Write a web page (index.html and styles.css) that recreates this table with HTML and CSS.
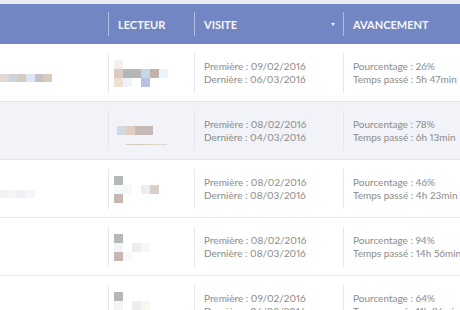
FILE: index.html
```html
<!DOCTYPE html>
<html lang="fr">
<head>
<meta charset="utf-8">
<link rel="stylesheet" href="styles.css">
</head>
<body>
<div class="strip"></div>
<div class="table">
  <div class="head">
    <div class="hcell first"></div>
    <div class="hcell"><span>LECTEUR</span></div>
    <div class="hcell sort"><span>VISITE</span><span class="arrow"></span></div>
    <div class="hcell"><span>AVANCEMENT</span></div>
  </div>

  <div class="row">
    <div class="cell first">
      <div class="blur name">
        <i class="b1"></i><i class="b2"></i><i class="b3"></i><i class="b4"></i><i class="b5"></i><i class="b6"></i>
      </div>
    </div>
    <div class="cell">
      <div class="av">
        <i class="f1"></i><i></i><i></i><i></i><i></i><i></i>
        <i class="a1"></i><i class="a2"></i><i class="a2"></i><i class="a3"></i><i class="a4"></i><i class="a5"></i>
        <i class="a6"></i><i class="a7"></i><i></i><i class="a8"></i><i></i><i></i>
      </div>
    </div>
    <div class="cell text">
      <p>Première : 09/02/2016</p>
      <p>Dernière : 06/03/2016</p>
    </div>
    <div class="cell text">
      <p>Pourcentage : 26%</p>
      <p>Temps passé : 5h 47min</p>
    </div>
  </div>

  <div class="row alt">
    <div class="cell first"></div>
    <div class="cell">
      <div class="av sh">
        <i></i><i></i><i></i><i></i><i></i><i></i>
        <i class="c1"></i><i class="c2"></i><i class="c3"></i><i class="c3"></i><i></i><i></i>
        <i class="f2"></i><i></i><i></i><i></i><i></i><i></i>
      </div>
      <div class="uline"></div>
    </div>
    <div class="cell text">
      <p>Première : 08/02/2016</p>
      <p>Dernière : 04/03/2016</p>
    </div>
    <div class="cell text">
      <p>Pourcentage : 78%</p>
      <p>Temps passé : 6h 13min</p>
    </div>
  </div>

  <div class="row">
    <div class="cell first">
      <div class="blur name faint">
        <i class="g1"></i><i class="g2"></i><i class="g3"></i><i class="g2"></i>
      </div>
    </div>
    <div class="cell">
      <div class="av">
        <i class="d1"></i><i></i><i></i><i></i><i></i><i></i>
        <i class="d2"></i><i class="d3"></i><i></i><i class="d4"></i><i class="d5"></i><i></i>
        <i class="d6"></i><i></i><i></i><i></i><i></i><i></i>
      </div>
    </div>
    <div class="cell text">
      <p>Première : 08/02/2016</p>
      <p>Dernière : 08/03/2016</p>
    </div>
    <div class="cell text">
      <p>Pourcentage : 46%</p>
      <p>Temps passé : 4h 23min</p>
    </div>
  </div>

  <div class="row">
    <div class="cell first"></div>
    <div class="cell">
      <div class="av">
        <i class="d1"></i><i></i><i></i><i></i><i></i><i></i>
        <i class="f2"></i><i></i><i class="d4"></i><i class="d3"></i><i></i><i></i>
        <i class="d6"></i><i class="f3"></i><i></i><i></i><i></i><i></i>
      </div>
    </div>
    <div class="cell text">
      <p>Première : 08/02/2016</p>
      <p>Dernière : 08/03/2016</p>
    </div>
    <div class="cell text">
      <p>Pourcentage : 94%</p>
      <p>Temps passé : 14h 56min</p>
    </div>
  </div>

  <div class="row">
    <div class="cell first"></div>
    <div class="cell">
      <div class="av">
        <i class="d1"></i><i></i><i></i><i></i><i></i><i></i>
        <i class="f2"></i><i></i><i class="d4"></i><i class="d3"></i><i></i><i></i>
        <i class="d6"></i><i class="f3"></i><i></i><i></i><i></i><i></i>
      </div>
    </div>
    <div class="cell text">
      <p>Première : 09/02/2016</p>
      <p>Dernière : 06/03/2016</p>
    </div>
    <div class="cell text">
      <p>Pourcentage : 64%</p>
      <p>Temps passé : 11h 26min</p>
    </div>
  </div>
</div>
</body>
</html>
```

FILE: styles.css
```css
* { box-sizing: border-box; }
html, body { margin: 0; padding: 0; }
body {
  background: #ffffff;
  font-family: Lato, "Open Sans", sans-serif;
  width: 460px;
  height: 310px;
  overflow: hidden;
}
.strip { height: 4px; background: #e9ecf3; }
.table { width: 520px; }
.head {
  display: grid;
  grid-template-columns: 108px 86px 149px 1fr;
  height: 40px;
  background: #7186c2;
}
.hcell {
  display: flex;
  align-items: center;
  margin: 8px 0;
  padding-left: 9px;
  border-left: 1px solid #b1bde0;
  color: #f5f7fc;
  font-weight: 700;
  font-size: 11px;
}
.hcell.first { border-left: none; }
.hcell.sort { justify-content: space-between; padding-right: 8px; }
.arrow {
  width: 0; height: 0;
  border-left: 2.5px solid transparent;
  border-right: 2.5px solid transparent;
  border-top: 3px solid #f5f7fc;
}
.row {
  display: grid;
  grid-template-columns: 108px 86px 149px 1fr;
  height: 58px;
  border-bottom: 1px solid #e4e6eb;
  background: #ffffff;
}
.row.alt { background: #f1f3f8; }
.cell {
  margin: 9px 0 8px;
  border-left: 1px solid #e7e8ec;
  padding-left: 9px;
  display: flex;
  flex-direction: column;
  justify-content: center;
}
.cell.first { border-left: none; padding-left: 0; }
.text p {
  margin: 0;
  font-size: 10px;
  line-height: 13px;
  color: #8b8b8b;
  white-space: nowrap;
  font-variant-numeric: proportional-nums;
}
.blur { display: flex; }
.blur i { display: block; width: 8.7px; height: 8px; }
.name { margin-top: 10px; }
.b1 { background: #e2d8d6; }
.b2 { background: #ccd4de; }
.b3 { background: #d6cac0; }
.b4 { background: #dde6f6; }
.b5 { background: #c9bfca; }
.b6 { background: #d8c9b9; }
.g1 { background: #f2f2f2; }
.g2 { background: #f6f6f8; }
.g3 { background: #eef2f6; }
.av {
  display: grid;
  grid-template-columns: repeat(6, 9px);
  grid-auto-rows: 9px;
  margin-left: -4px;
}
.av.sh { margin-left: -1px; }
.av i { display: block; }
.f1 { background: #f6f0ec; }
.f2 { background: #f3f4f8; }
.f3 { background: #f6f8fc; }
.a1 { background: #dccbc0; }
.a2 { background: #b6b6b6; }
.a3 { background: #c6d6e4; }
.a4 { background: #c0b3ad; }
.a5 { background: #eaf5fb; }
.a6 { background: #ede1d2; }
.a7 { background: #f1f3fb; }
.a8 { background: #b9c1e5; }
.c1 { background: #d1d9e3; }
.c2 { background: #dfcec0; }
.c3 { background: #c5b9b5; }
.uline {
  height: 1px;
  width: 41px;
  margin: 0 0 0 8px;
  background: linear-gradient(90deg, #cfcfcf, #d8c6b8, #e3dcc3, #cfd3df);
}
.d1 { background: #b4b8b8; }
.d2 { background: #f1fbfb; }
.d3 { background: #f8f8f3; }
.d4 { background: #ededed; }
.d5 { background: #d7d0c9; }
.d6 { background: #c6b7b3; }
```
